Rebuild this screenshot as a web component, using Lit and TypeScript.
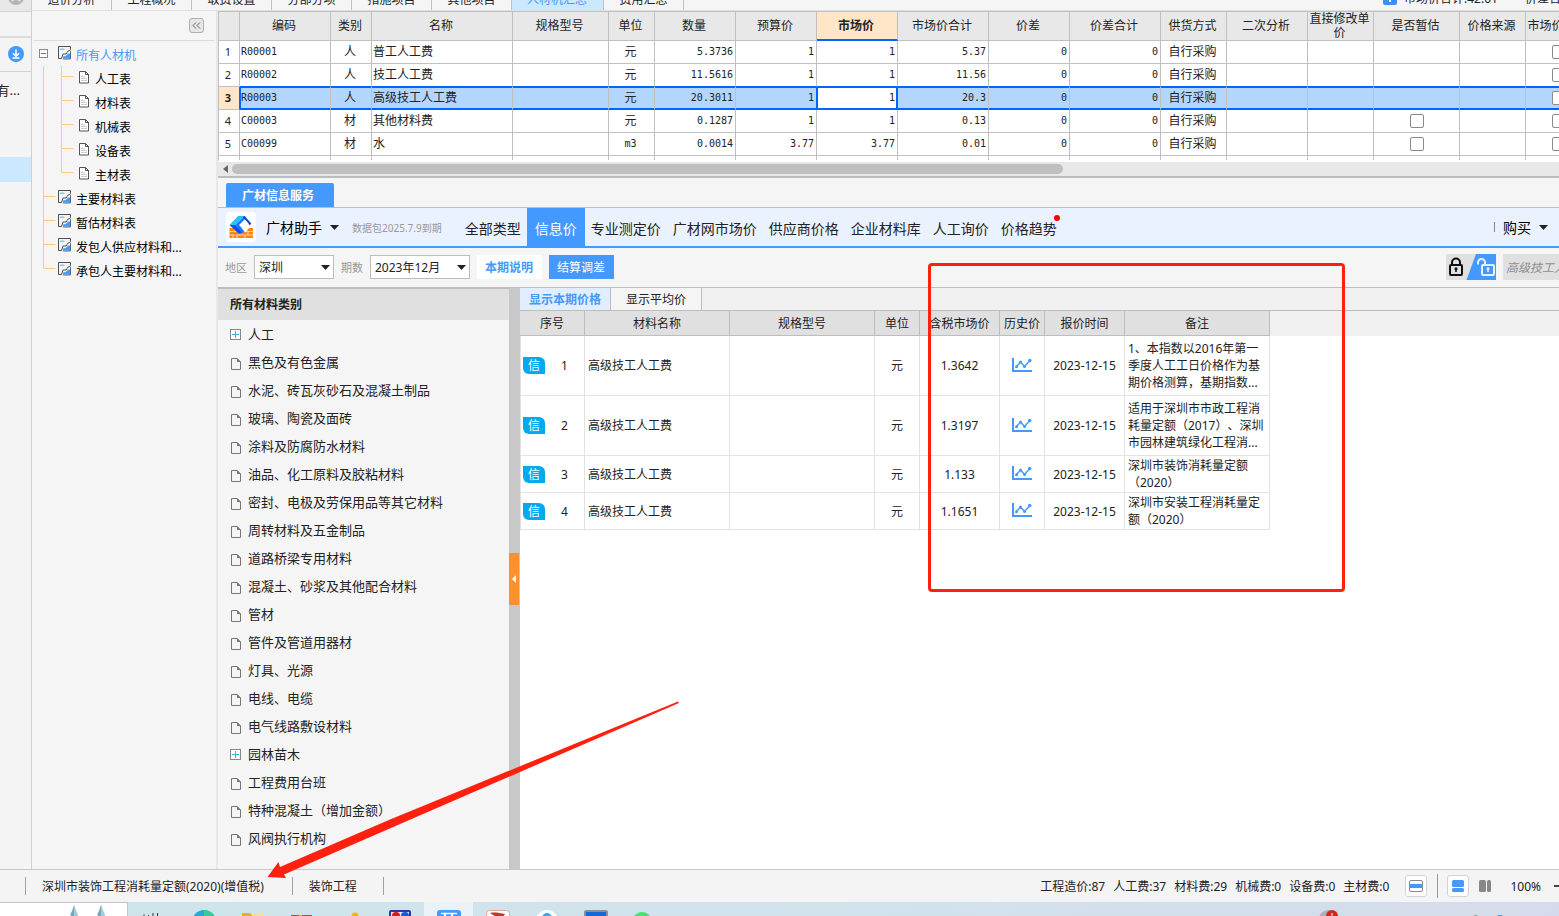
import { LitElement, html, css, svg, nothing } from "lit";
import { customElement, state } from "lit/decorators.js";
import { classMap } from "lit/directives/class-map.js";

const reset = css`
  *, *::before, *::after { box-sizing: border-box; }
  button, input, select {
    margin: 0; padding: 0; border: 0; background: none; color: inherit;
    font: inherit; border-radius: 0; outline: none;
  }
  ul, h2 { margin: 0; padding: 0; list-style: none; }
  a { color: inherit; text-decoration: none; }
  svg { display: block; flex: none; }
  table { border-collapse: separate; border-spacing: 0; table-layout: fixed; }
  th, td { padding: 0; font-weight: 400; }
`;

/* ---------- far left rail ---------- */

@customElement("side-rail")
export class SideRail extends LitElement {
  static styles = [reset, css`
    :host { display: flex; flex-direction: column; width: 32px; flex: none; border-right: 1px solid #cfcfcf; background: #f4f4f4; }
    .top { height: 12px; background: #e8e8e8; border-bottom: 1px solid #d4d4d4; overflow: hidden; display: flex; justify-content: center; align-items: flex-end; padding-bottom: 6px; }
    .blank { height: 26px; border-bottom: 2px solid #dcdcdc; }
    .down { height: 34px; width: 100%; padding-bottom: 1px; border-bottom: 1px solid #d4d4d4; display: flex; align-items: center; justify-content: center; }
    .item { height: 34px; width: 20px; display: flex; justify-content: flex-end; align-items: center; overflow: hidden; font-size: 13px; color: #222; white-space: nowrap; }
    .current { height: 25px; margin-top: 51px; background: #cce8ff; }
  `];
  render() {
    return html`
      <div class="top"><svg width="16" height="16" viewBox="0 0 16 16"><circle cx="8" cy="8" r="8" fill="#b4b4b4"/><path d="M4 12l4-4 4 4" stroke="#e8e8e8" stroke-width="2" fill="none"/></svg></div>
      <div class="blank"></div>
      <button class="down" aria-label="下载">
        <svg width="16" height="16" viewBox="0 0 16 16"><circle cx="8" cy="8" r="8" fill="#4499ff"/><path d="M8 3.5v6.500M4.800 7.200L8 10.200l3.200-3M4.500 12h7" stroke="#fff" stroke-width="1.500" fill="none"/></svg>
      </button>
      <a class="item" href="#">有...</a>
      <div class="current"></div>`;
  }
}

/* ---------- tab strip ---------- */

@customElement("module-tabs")
export class ModuleTabs extends LitElement {
  @state() private active = 6;
  private tabs = ["造价分析", "工程概况", "取费设置", "分部分项", "措施项目", "其他项目", "人材机汇总", "费用汇总"];
  static styles = [reset, css`
    :host { display: flex; align-items: flex-end; height: 11px; overflow: hidden; border-bottom: 1px solid #e0e0e0; font-size: 12px; color: #222; }
    .tab { height: 22px; flex: none; min-width: 80px; padding: 0 15px; border-right: 1px solid #c0c0c0; }
    .tab.on { background: #cce8ff; color: #4499ff; padding: 0 16px 0 15px; }
    .sums { margin-left: auto; flex: none; display: flex; align-items: center; height: 24px; width: 176px; overflow: hidden; white-space: nowrap; }
    .plus { margin-right: 7px; }
    .bar { width: 1px; height: 12px; background: #8fb0dc; margin: 0 13px 0 14px; }
  `];
  render() {
    return html`
      ${this.tabs.map((t, i) => html`<button class=${classMap({ tab: true, on: i === this.active })} @click=${() => (this.active = i)}>${t}</button>`)}
      <div class="sums">
        <svg class="plus" width="14" height="14" viewBox="0 0 14 14"><rect width="14" height="14" rx="2" fill="#3d8ff0"/><path d="M7 3v8M3 7h8" stroke="#fff" stroke-width="2"/></svg>
        <span>市场价合计:42.01</span><span class="bar"></span><span>价差合计:0</span>
      </div>`;
  }
}

/* ---------- resource tree ---------- */

const sheetIcon = html`<svg width="14" height="14" viewBox="0 0 14 14"><path d="M12.500 3V.5H.5v12h3" fill="none" stroke="#4a4f55"/><path d="M13 3.500L9.500 5.500 8 8H5L3.500 12.500" fill="none" stroke="#4a4f55"/><path d="M2 2.500h4.500V4H2z" fill="#8cc4ff"/><path d="M5 10.500l3-.5 2-2.500h2.500V12.500H5z" fill="#4499ff"/><path d="M12.500 5v8H5" fill="none" stroke="#4a4f55" stroke-width=".8"/></svg>`;
const docIcon = html`<svg width="12" height="13" viewBox="0 0 12 13"><path d="M.5.5H6.500L9.500 3.500v8.500H.5z" fill="#fff" stroke="#555"/><path d="M6.500.5v3h3" fill="none" stroke="#555"/><path d="M2 5.500h4M2 7.500h6M2 9.500h6" stroke="#ccc"/></svg>`;

@customElement("resource-tree")
export class ResourceTree extends LitElement {
  private leaves = ["人工表", "材料表", "机械表", "设备表", "主材表"];
  private groups = ["主要材料表", "暂估材料表", "发包人供应材料和...", "承包人主要材料和..."];
  static styles = [reset, css`
    :host { display: block; width: 186px; flex: none; border-right: 2px solid #e8e8e8; background: #f5f5f5; font-size: 12px; color: #000; }
    .head { height: 30px; margin: 0 2px; padding-right: 10px; border-bottom: 1px solid #dcdcdc; display: flex; align-items: center; justify-content: flex-end; }
    .fold { width: 15px; height: 15px; border: 1px solid #b0b0b0; border-radius: 3px; background: #e6e6e6; display: flex; align-items: center; justify-content: center; }
    .tree { padding: 1px 0 0 2px; }
    .row { display: flex; align-items: flex-start; height: 24px; white-space: nowrap; }
    .ico { height: 22px; display: flex; align-items: center; margin-right: 4px; }
    .box { width: 24px; height: 22px; padding-left: 5px; display: flex; align-items: center; }
    .label { line-height: 27px; }
    .label.on { color: #4499ff; }
  `];
  private rail(last: boolean, branch: boolean, x: number, w: number) {
    const d = branch ? `M${x}.5 0V${last ? "10.5" : "24"}M${x}.5 10.500H${x + 12}.5` : `M${x}.5 0V24`;
    return html`<svg width=${w} height="24">${svg`<path d=${d} stroke="#ffc87d" fill="none"/>`}</svg>`;
  }
  render() {
    return html`
      <div class="head"><button class="fold" aria-label="收起"><svg width="9" height="7" viewBox="0 0 9 7"><path d="M4 .5l-3 3 3 3M8 .5l-3 3 3 3" stroke="#666" fill="none"/></svg></button></div>
      <ul class="tree">
        <li class="row"><span class="box"><svg width="9" height="9" viewBox="0 0 9 9"><rect x=".5" y=".5" width="8" height="8" fill="#fff" stroke="#888"/><path d="M2 4.500h5" stroke="#28a"/></svg></span><span class="ico">${sheetIcon}</span><a class="label on" href="#">所有人材机</a></li>
        ${this.leaves.map((t, i) => html`<li class="row">${this.rail(false, false, 9, 27)}${this.rail(i === this.leaves.length - 1, true, 0, 18)}<span class="ico">${docIcon}</span><a class="label" href="#">${t}</a></li>`)}
        ${this.groups.map((t, i) => html`<li class="row">${this.rail(i === this.groups.length - 1, true, 9, 24)}<span class="ico">${sheetIcon}</span><a class="label" href="#">${t}</a></li>`)}
      </ul>`;
  }
}

/* ---------- upper data grid ---------- */

interface Line { code: string; kind: string; name: string; unit: string; qty: string; budget: string; market: string; total: string; est: boolean; }
const lines: Line[] = [
  { code: "R00001", kind: "人", name: "普工人工费", unit: "元", qty: "5.3736", budget: "1", market: "1", total: "5.37", est: false },
  { code: "R00002", kind: "人", name: "技工人工费", unit: "元", qty: "11.5616", budget: "1", market: "1", total: "11.56", est: false },
  { code: "R00003", kind: "人", name: "高级技工人工费", unit: "元", qty: "20.3011", budget: "1", market: "1", total: "20.3", est: false },
  { code: "C00003", kind: "材", name: "其他材料费", unit: "元", qty: "0.1287", budget: "1", market: "1", total: "0.13", est: true },
  { code: "C00099", kind: "材", name: "水", unit: "m3", qty: "0.0014", budget: "3.77", market: "3.77", total: "0.01", est: true },
];

@customElement("price-grid")
export class PriceGrid extends LitElement {
  private heads = ["", "编码", "类别", "名称", "规格型号", "单位", "数量", "预算价", "市场价", "市场价合计", "价差", "价差合计", "供货方式", "二次分析", "直接修改单价", "是否暂估", "价格来源", "市场价锁定"];
  private widths = [21, 91, 41, 141, 96, 46, 81, 81, 81, 91, 81, 91, 66, 81, 66, 86, 66, 66];
  static styles = [reset, css`
    :host { display: block; border-bottom: 2px solid #bdbdbd; font-size: 12px; color: #222; }
    .wrap { height: 151px; overflow: hidden; background: #fff; border-bottom: 2px solid #fff; border-left: 1px solid #c0c0c0; }
    table { width: 1373px; border-top: 1px solid #c0c0c0; }
    th { height: 29px; padding-right: 2px; background: #e8e8e8; line-height: 14px; border-right: 1px solid #c0c0c0; border-bottom: 1px solid #c0c0c0; }
    th.market { background: #ffe6c8; font-weight: 700; border-bottom: 2px solid #0066ff; }
    td { height: 23px; padding-right: 2px; border-right: 1px solid #c0c0c0; border-bottom: 1px solid #c0c0c0; text-align: center; line-height: 20px; white-space: nowrap; overflow: hidden; }
    td.no { font-size: 11px; }
    td.left { text-align: left; padding-left: 1px; }
    td.mono { font-family: "DejaVu Sans Mono", monospace; font-size: 10px; }
    td.num { text-align: right; }
    td.check { padding-right: 0; }
    .before td:not(.no) { border-bottom-color: #0066ff; }
    .sel td:not(.no) { background: #b3d6ff; border-bottom-color: #0066ff; box-shadow: inset 0 1px #0066ff, inset 0 -1px #0066ff; }
    .sel td.no { background: #ffe6c8; font-weight: 700; border-right-color: #0066ff; }
    .sel td.first { box-shadow: inset 1px 1px #0066ff, inset 0 -1px #0066ff; }
    .sel td.budget { border-right-color: #0066ff; }
    .sel td.market { background: #fff; border-right-color: #0066ff; box-shadow: inset 0 0 0 1px #0066ff; }
    input { appearance: none; width: 14px; height: 14px; border: 1px solid #8a8a8a; border-radius: 2px; background: #fff; display: block; margin: 0 auto; }
    .scroll { height: 14px; background: #e8e8e8; display: flex; align-items: center; }
    .arrow { width: 14px; height: 14px; display: flex; align-items: center; justify-content: center; }
    .thumb { width: 62%; height: 10px; border-radius: 5px; background: #bfbfbf; }
  `];
  render() {
    return html`
      <div class="wrap">
        <table>
          <colgroup>${this.widths.map((w) => html`<col width=${w}>`)}</colgroup>
          <thead><tr>${this.heads.map((h) => html`<th class=${h === "市场价" ? "market" : ""}>${h}</th>`)}</tr></thead>
          <tbody>
            ${lines.map((l, i) => html`<tr class=${i === 2 ? "sel" : i === 1 ? "before" : ""}>
              <td class="no">${i + 1}</td>
              <td class="left mono first">${l.code}</td><td>${l.kind}</td><td class="left">${l.name}</td><td></td>
              <td class=${l.unit === "m3" ? "mono" : ""}>${l.unit}</td>
              <td class="num mono">${l.qty}</td><td class="num mono budget">${l.budget}</td><td class="num mono market">${l.market}</td>
              <td class="num mono">${l.total}</td><td class="num mono">0</td><td class="num mono">0</td>
              <td>自行采购</td><td></td><td></td>
              <td class="check">${l.est ? html`<input type="checkbox" aria-label="是否暂估">` : nothing}</td><td></td>
              <td class="check"><input type="checkbox" aria-label="市场价锁定"></td>
            </tr>`)}
            <tr>${this.heads.map(() => html`<td></td>`)}</tr>
          </tbody>
        </table>
      </div>
      <div class="scroll"><span class="arrow"><svg width="5" height="8" viewBox="0 0 5 8"><path d="M5 0v8L0 4z" fill="#666"/></svg></span><span class="thumb"></span></div>`;
  }
}

/* ---------- price service panel ---------- */

const caret = html`<svg width="9" height="5" viewBox="0 0 9 5"><path d="M0 0h9L4.500 5z" fill="#222"/></svg>`;

@customElement("service-nav")
export class ServiceNav extends LitElement {
  private items = ["全部类型", "信息价", "专业测定价", "广材网市场价", "供应商价格", "企业材料库", "人工询价", "价格趋势"];
  @state() private active = 1;
  static styles = [reset, css`
    :host { display: block; color: #222; }
    .tabs { height: 30px; padding: 5px 8px 0; border-bottom: 1px solid #bdbdbd; display: flex; }
    .tab { width: 108px; height: 24px; padding-right: 4px; background: #4499ff; color: #fff; font-size: 12px; font-weight: 700; border-radius: 2px 2px 0 0; }
    nav { height: 40px; background: #ebf2ff; border-bottom: 2px solid #4499ff; display: flex; align-items: center; padding-left: 8px; font-size: 14px; white-space: nowrap; }
    .brand { display: flex; align-items: center; gap: 8px; margin-left: 10px; color: #000; }
    .note { font-size: 10px; color: #999; margin: 0 17px 0 13px; }
    .item { height: 38px; padding: 2px 6px 0; position: relative; }
    .item.on { background: #4499ff; color: #fff; padding: 2px 8px 0; }
    .dot { position: absolute; top: 7px; right: 3px; width: 6px; height: 6px; border-radius: 3px; background: #ff0000; }
    .buy { margin-left: auto; margin-right: 11px; display: flex; align-items: center; gap: 8px; color: #000; }
    .buy::before { content: ""; width: 1px; height: 10px; background: #888; }
  `];
  render() {
    return html`
      <div class="tabs"><button class="tab">广材信息服务</button></div>
      <nav>
        <svg width="30" height="30" viewBox="0 0 30 30"><rect width="30" height="30" rx="4" fill="#fff"/>
          <path d="M3.500 16h23.500v10H3.500z" fill="#ff8512"/>
          <path d="M3 19.500h24M3 23h24M9 16v3.500M7 23v3M13 19.500V23M22 19.500V23M11 23v3M19 23v3" stroke="#ffe2c4" stroke-width=".8"/>
          <path d="M12 4h6.500L9.500 13H3.500z" fill="#27c0fa"/><path d="M3.500 13h6l7 7.500-3.500 1.500z" fill="#0b50e8"/><path d="M9.500 13L18.500 4l2 1.500L13 13l5.500 6-2 2z" fill="#1278ff"/>
          <path d="M17.500 4.500l6.500 7-1 1" stroke="#0b4fc4" stroke-width="2" fill="none"/><path d="M15.500 16h7.500l-3.500 4.500z" fill="#fff"/></svg>
        <button class="brand">广材助手 ${caret}</button>
        <span class="note">数据包2025.7.9到期</span>
        ${this.items.map((t, i) => html`<button class=${classMap({ item: true, on: i === this.active })} @click=${() => (this.active = i)}>${t}${i === 7 ? html`<span class="dot"></span>` : nothing}</button>`)}
        <button class="buy">购买 ${caret}</button>
      </nav>`;
  }
}

@customElement("service-filter")
export class ServiceFilter extends LitElement {
  static styles = [reset, css`
    :host { display: flex; align-items: center; height: 40px; padding: 0 0 1px 7px; border-bottom: 1px solid #bdbdbd; font-size: 12px; color: #222; white-space: nowrap; }
    label { display: flex; align-items: center; gap: 7px; font-size: 11px; color: #999; margin-right: 7px; }
    .pick { display: grid; grid-template-columns: 1fr 12px; align-items: center; height: 24px; border: 1px solid #bdbdbd; background: #fff; font-size: 12px; color: #222; }
    .pick > * { grid-row: 1; }
    .pick svg { grid-column: 2; pointer-events: none; }
    select { appearance: none; grid-column: 1 / 3; height: 22px; padding-left: 4px; width: 100%; }
    .area { width: 80px; }
    .term { width: 100px; }
    .btn { width: 65px; height: 24px; padding-right: 1px; background: #4499ff; color: #fff; margin-right: 7px; }
    .btn.plain { background: #fff; color: #4499ff; font-weight: 700; }
    .locks { margin-left: auto; margin-right: 7px; }
    .find { width: 56px; height: 26px; background: #e0e0e0; padding-left: 3px; font-style: italic; }
    .find::placeholder { color: #8f8f8f; opacity: 1; }
  `];
  render() {
    return html`
      <label>地区<span class="pick area"><select><option>深圳</option></select>${caret}</span></label>
      <label>期数<span class="pick term"><select><option>2023年12月</option></select>${caret}</span></label>
      <button class="btn plain">本期说明</button><button class="btn">结算调差</button>
      <button class="locks" aria-label="锁定"><svg width="50" height="26" viewBox="0 0 50 26"><path d="M0 0h50v26H0z" fill="#e0e0e0"/><path d="M30 0h20v26H20.500z" fill="#4499ff"/>
        <rect x="4" y="11" width="12" height="10" rx="1" fill="none" stroke="#111" stroke-width="2"/><path d="M6 11V8.500a4 4 0 018 0V11" fill="none" stroke="#111" stroke-width="2"/><path d="M9.200 14h1.600v4H9.200z" fill="#111"/><circle cx="10" cy="14.800" r="1.500" fill="#111"/>
        <rect x="36" y="11" width="12" height="10" rx="1" fill="none" stroke="#e6f1ff" stroke-width="2"/><path d="M32 10.500V8.500a3.500 3.500 0 017 0V11" fill="none" stroke="#e6f1ff" stroke-width="2"/><path d="M41.200 14h1.600v4h-1.600z" fill="#e6f1ff"/><circle cx="42" cy="14.800" r="1.500" fill="#e6f1ff"/></svg></button>
      <input class="find" type="text" aria-label="搜索材料" placeholder="高级技工人工费">`;
  }
}

const cats = ["人工", "黑色及有色金属", "水泥、砖瓦灰砂石及混凝土制品", "玻璃、陶瓷及面砖", "涂料及防腐防水材料", "油品、化工原料及胶粘材料", "密封、电极及劳保用品等其它材料", "周转材料及五金制品", "道路桥梁专用材料", "混凝土、砂浆及其他配合材料", "管材", "管件及管道用器材", "灯具、光源", "电线、电缆", "电气线路敷设材料", "园林苗木", "工程费用台班", "特种混凝土（增加金额）", "风阀执行机构"];
const plusBox = html`<svg width="11" height="14" viewBox="0 -2 11 14"><rect x=".5" y=".5" width="10" height="10" fill="#fff" stroke="#888"/><path d="M2 5.500h7M5.500 2v7" stroke="#3ab0d8"/></svg>`;
const pageIcon = html`<svg width="11" height="16" viewBox="0 -4 11 16"><path d="M1.500.5H7l3.500 3.500v7.500h-9z" fill="none" stroke="#777"/><path d="M7 0v4h4z" fill="#777"/></svg>`;

@customElement("category-list")
export class CategoryList extends LitElement {
  static styles = [reset, css`
    :host { display: flex; flex: none; width: 302px; color: #222; background: #f5f5f5; text-spacing-trim: space-all; }
    .col { flex: 1; }
    h2 { height: 32px; padding-left: 12px; border-top: 1px solid #bdbdbd; background: #e0e0e0; font-size: 12px; font-weight: 700; line-height: 31px; }
    li { height: 28px; padding-left: 12px; }
    a { display: flex; align-items: center; gap: 7px; height: 28px; font-size: 13px; line-height: 28px; white-space: nowrap; }
    .split { width: 11px; background: #c8c8c8; display: flex; flex-direction: column; padding-top: 265px; }
    .grip { width: 10px; height: 52px; background: #ff9030; display: flex; align-items: center; justify-content: center; }
  `];
  render() {
    return html`
      <div class="col"><h2>所有材料类别</h2>
        <ul>${cats.map((c) => html`<li><a href="#">${c === "人工" || c === "园林苗木" ? plusBox : pageIcon}${c}</a></li>`)}</ul></div>
      <div class="split"><button class="grip" aria-label="收起类别"><svg width="4" height="8" viewBox="0 0 4 8"><path d="M4 0v8L0 4z" fill="#fff"/></svg></button></div>`;
  }
}

const quotes = [
  { price: "1.3642", tall: true, note: ["1、本指数以2016年第一", "季度人工工日价格作为基", "期价格测算，基期指数..."] },
  { price: "1.3197", tall: true, note: ["适用于深圳市市政工程消", "耗量定额（2017）、深圳", "市园林建筑绿化工程消..."] },
  { price: "1.133", tall: false, note: ["深圳市装饰消耗量定额", "（2020）"] },
  { price: "1.1651", tall: false, note: ["深圳市安装工程消耗量定", "额（2020）"] },
];

@customElement("quote-table")
export class QuoteTable extends LitElement {
  private heads = ["序号", "材料名称", "规格型号", "单位", "含税市场价", "历史价", "报价时间", "备注"];
  private widths = [65, 145, 145, 45, 80, 45, 80, 145];
  static styles = [reset, css`
    :host { display: block; flex: 1; min-width: 0; background: #fff; font-size: 12px; color: #222; overflow: hidden; text-spacing-trim: space-all; }
    .tabs { display: flex; height: 23px; background: #f0f0f0; border-bottom: 1px solid #bdbdbd; }
    .tab { width: 91px; border-right: 1px solid #bdbdbd; background: #f5f5f5; }
    .tab.on { background: #e0eeff; color: #4499ff; font-weight: 700; }
    .band { background: linear-gradient(#f0f0f0 25px, #fff 25px); }
    table { width: 750px; }
    th { height: 25px; background: #e0e0e0; border-right: 1px solid #bdbdbd; border-bottom: 1px solid #bdbdbd; white-space: nowrap; }
    td { height: 37px; border-right: 1px solid #e3e3e3; border-bottom: 1px solid #e3e3e3; text-align: center; line-height: 17px; background: #fff; white-space: nowrap; }
    td:first-child { border-left: 1px solid #e3e3e3; }
    .tall td { height: 60px; }
    td.left { text-align: left; padding-left: 3px; }
    .no { display: flex; align-items: center; padding-left: 2px; }
    .no .n { width: 39px; }
    .mark { width: 22px; height: 17px; background: #00aaee; color: #fff; border-radius: 0 6px 0 6px; line-height: 17px; }
    td svg { margin: 0 auto; }
  `];
  render() {
    return html`
      <div class="tabs"><button class="tab on">显示本期价格</button><button class="tab">显示平均价</button></div>
      <div class="band"><table>
        <colgroup>${this.widths.map((w) => html`<col width=${w}>`)}</colgroup>
        <thead><tr>${this.heads.map((h) => html`<th>${h}</th>`)}</tr></thead>
        <tbody>${quotes.map((q, i) => html`<tr class=${q.tall ? "tall" : ""}>
          <td><span class="no"><span class="mark">信</span><span class="n">${i + 1}</span></span></td>
          <td class="left">高级技工人工费</td><td></td><td>元</td><td>${q.price}</td>
          <td><svg width="20" height="16" viewBox="0 0 20 16"><path d="M1 0v13h19" fill="none" stroke="#4499ff" stroke-width="2"/><path d="M4 9l4.500-5 4 4.500L18 2.500" fill="none" stroke="#4499ff" stroke-width="1.500"/><g fill="#4499ff"><circle cx="4.500" cy="8.800" r="1.500"/><circle cx="8.500" cy="4" r="1.500"/><circle cx="12.500" cy="8.500" r="1.500"/><circle cx="17.800" cy="2.500" r="1.700"/></g></svg></td>
          <td>2023-12-15</td>
          <td class="left">${q.note.map((n, k) => html`${k ? html`<br>` : nothing}${n}`)}</td>
        </tr>`)}</tbody>
      </table></div>`;
  }
}

/* ---------- bottom bars ---------- */

@customElement("status-bar")
export class StatusBar extends LitElement {
  static styles = [reset, css`
    :host { display: flex; align-items: center; height: 33px; flex: none; background: #f4f4f4; border-top: 1px solid #c8c8c8; font-size: 12px; color: #222; white-space: nowrap; overflow: hidden; }
    .sep { width: 1px; height: 18px; background: #98a2b0; }
    .left { display: flex; align-items: center; gap: 16px; padding-left: 25px; }
    .left .mid { margin-left: 12px; }
    .left .end { margin-left: 10px; }
    .right { margin-left: auto; display: flex; align-items: center; }
    .sums { display: flex; gap: 8px; margin-right: 16px; }
    .btn { width: 22px; height: 22px; display: flex; align-items: center; justify-content: center; }
    .btn.framed { background: #fff; border: 1px solid #d4d4d4; border-radius: 3px; }
    .tallsep { width: 1px; height: 24px; background: #999; margin: 0 9px 0 10px; }
    .cols { margin-left: 5px; }
    .zoom { margin: 0 13px 0 14px; }
    .minus { width: 5px; height: 2px; background: #444; }
  `];
  render() {
    return html`
      <div class="left"><span class="sep"></span><span>深圳市装饰工程消耗量定额(2020)(增值税)</span><span class="sep mid"></span><span>装饰工程</span><span class="sep end"></span></div>
      <div class="right">
        <div class="sums">${["工程造价:87", "人工费:37", "材料费:29", "机械费:0", "设备费:0", "主材费:0"].map((t) => html`<span>${t}</span>`)}</div>
        <button class="btn framed" aria-label="分栏"><svg width="14" height="12" viewBox="0 0 14 12"><rect x=".5" y=".5" width="13" height="11" rx="1.500" fill="#fff" stroke="#888"/><path d="M1 4h12v4H1z" fill="#4499ff"/></svg></button>
        <span class="tallsep"></span>
        <button class="btn framed" aria-label="上下布局"><svg width="12" height="12" viewBox="0 0 12 12"><rect width="12" height="7" rx="1.500" fill="#4499ff"/><rect y="8" width="12" height="4" rx="1.500" fill="#4499ff"/></svg></button>
        <button class="btn cols" aria-label="左右布局"><svg width="12" height="12" viewBox="0 0 12 12" ><rect width="7" height="12" rx="1.500" fill="#888"/><rect x="8" width="4" height="12" rx="1.500" fill="#888"/></svg></button>
        <span class="zoom">100%</span><span class="minus"></span>
      </div>`;
  }
}

@customElement("task-bar")
export class TaskBar extends LitElement {
  static styles = [reset, css`
    :host { display: flex; height: 14px; flex: none; overflow: hidden; background: linear-gradient(90deg, #cde5ea, #d2e2ec 60%, #d5dbea); }
    .search { width: 128px; height: 14px; background: #fff; border: 1px solid #c4c4c4; border-width: 1px 1px 0 0; display: flex; justify-content: flex-end; gap: 17px; padding: 2px 21px 0 0; }
    .frag { width: 51px; padding: 11px 0 0 14px; }
    .slot { width: 49px; display: flex; justify-content: center; align-items: flex-end; }
    .slot.on { background: #e9f3f7; }
    .tray { margin-left: auto; display: flex; align-items: flex-end; }
  `];
  private icons = [
    svg`<circle cx="12" cy="12" r="12" fill="#2aa8d8"/><path d="M12 0a12 12 0 0112 12H12z" fill="#3cc99a"/>`,
    svg`<path d="M1 3h8l2 2h11v5H1z" fill="#e8b020"/><path d="M11 4h11v3H11z" fill="#ffe08a"/>`,
    svg`<path d="M1 5h8v5H1zM12 5h10v5H12z" fill="#d83c30"/><path d="M9 5h3v5H9z" fill="#f5a623"/>`,
    svg`<circle cx="16" cy="6" r="3.500" fill="#f8b400"/>`,
    svg`<rect x="1" width="22" height="12" rx="2" fill="#2c3a9e"/><path d="M3 2h18v8H3z" fill="#dfe6fb"/><circle cx="8" cy="6" r="4" fill="#e01818"/><circle cx="17" cy="6" r="4" fill="#1858d8"/>`,
    svg`<rect width="24" height="14" rx="3" fill="#4499ff"/><path d="M4 3.500h16" stroke="#fff" stroke-width="1.500"/><path d="M8 4v2M15 4v2" stroke="#fff" stroke-width="2"/>`,
    svg`<rect x=".5" y=".5" width="23" height="14" rx="3" fill="#fff" stroke="#d8a8a0"/><path d="M4 3c5-1 9 0 15 1l-3 4H12z" fill="#c83028"/>`,
    svg`<circle cx="12" cy="11" r="11" fill="#fff"/><path d="M7 8a5 5 0 0110 0z" fill="#38a8f8"/>`,
    svg`<rect width="24" height="12" rx="2" fill="#8a8f98"/><path d="M2 2h20v8H2z" fill="#1468d8"/>`,
    svg`<circle cx="9" cy="10" r="10" fill="#48e070"/>`,
  ];
  render() {
    const drop = html`<svg width="10" height="12" viewBox="0 0 10 12"><path d="M5 0l2 6 2 4-4 2-4-2 2-4z" fill="#6fa9bf"/><path d="M5 0l2 6 2 4-4 2z" fill="#a9cbd8"/></svg>`;
    return html`
      <div class="search">${drop}${drop}</div>
      <div class="frag"><svg width="20" height="3"><path d="M2 1.500v1.500M11 0v3M15.500 0v3M6.500 2v1" stroke="#333" stroke-width="1"/></svg></div>
      ${this.icons.map((s, i) => html`<span class=${classMap({ slot: true, on: i === 5 })}><svg width="24" height=${i === 9 ? 4 : 6} viewBox="0 0 24 ${i === 9 ? 4 : 6}">${s}</svg></span>`)}
      <div class="tray"><svg width="240" height="6" viewBox="0 0 240 6"><circle cx="9" cy="9" r="9" fill="#a8b2c0"/><circle cx="13" cy="6" r="6" fill="#d0281c"/><path d="M13 3v3" stroke="#fff"/><path d="M154 6l3-1 2 1z" fill="#58a888"/><circle cx="181" cy="9" r="4" fill="#3c90e0"/></svg></div>`;
  }
}

/* ---------- page ---------- */

@customElement("app-root")
export class AppRoot extends LitElement {
  static styles = [reset, css`
    :host { display: flex; flex-direction: column; height: 100vh; position: relative; overflow: hidden; background: #f5f5f5; font-family: "Noto Sans", "Noto Sans CJK SC", sans-serif; }
    .body, .under, .lower { display: flex; flex: 1; min-height: 0; min-width: 0; }
    .body { overflow: hidden; }
    .area, .main { display: flex; flex-direction: column; flex: 1; min-width: 0; min-height: 0; }
    .frame { position: absolute; left: 928px; top: 263px; width: 417px; height: 329px; border: 3px solid #ff2010; border-radius: 4px; pointer-events: none; }
    .pointer { position: absolute; left: 260px; top: 695px; pointer-events: none; }
  `];
  render() {
    return html`
      <div class="body">
        <side-rail></side-rail>
        <div class="area">
          <module-tabs></module-tabs>
          <div class="under">
            <resource-tree></resource-tree>
            <div class="main">
              <price-grid></price-grid>
              <service-nav></service-nav>
              <service-filter></service-filter>
              <div class="lower"><category-list></category-list><quote-table></quote-table></div>
            </div>
          </div>
        </div>
      </div>
      <status-bar></status-bar>
      <task-bar></task-bar>
      <div class="frame"></div>
      <svg class="pointer" width="430" height="190" viewBox="260 695 430 190"><path d="M267.500 877L278.500 862l1.500 5L390 819.500 678 701.500l1 1.500L407 821 284 874.500l2 3.500z" fill="#ff2010"/></svg>`;
  }
}
